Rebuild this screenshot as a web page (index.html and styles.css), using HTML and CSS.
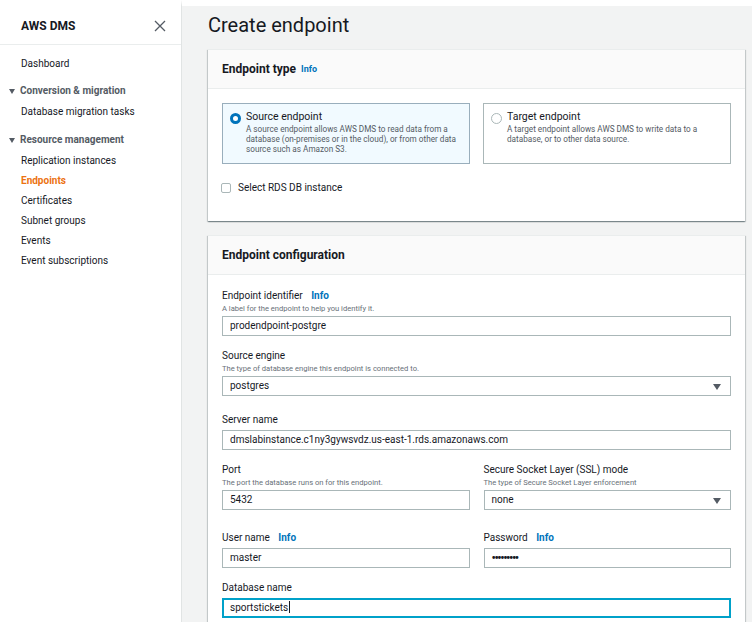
FILE: index.html
```html
<!DOCTYPE html>
<html lang="en">
<head>
<meta charset="utf-8">
<title>Create endpoint</title>
<link rel="stylesheet" href="styles.css">
</head>
<body>
<div class="app">
  <aside class="sidebar">
    <div class="side-head">
      <span class="brand">AWS DMS</span>
      <svg class="close" width="12" height="12" viewBox="0 0 12 12"><path d="M1 1L11 11M11 1L1 11" stroke="#545b64" stroke-width="1.3" fill="none"/></svg>
    </div>
    <nav class="nav">
      <a class="nav-item">Dashboard</a>
      <div class="nav-group"><span class="tri"></span>Conversion &amp; migration</div>
      <a class="nav-item">Database migration tasks</a>
      <div class="nav-group g2"><span class="tri"></span>Resource management</div>
      <a class="nav-item">Replication instances</a>
      <a class="nav-item active">Endpoints</a>
      <a class="nav-item">Certificates</a>
      <a class="nav-item">Subnet groups</a>
      <a class="nav-item">Events</a>
      <a class="nav-item">Event subscriptions</a>
    </nav>
  </aside>
  <main class="main">
    <h1 class="title">Create endpoint</h1>
    <section class="panel">
      <header class="panel-head">Endpoint type <span class="info">Info</span></header>
      <div class="panel-body p1">
        <div class="cards">
          <div class="card selected">
            <span class="radio on"></span>
            <div class="card-text">
              <div class="card-title">Source endpoint</div>
              <div class="card-desc">A source endpoint allows AWS DMS to read data from a database (on-premises or in the cloud), or from other data source such as Amazon S3.</div>
            </div>
          </div>
          <div class="card">
            <span class="radio"></span>
            <div class="card-text">
              <div class="card-title">Target endpoint</div>
              <div class="card-desc">A target endpoint allows AWS DMS to write data to a database, or to other data source.</div>
            </div>
          </div>
        </div>
        <label class="check"><span class="box"></span>Select RDS DB instance</label>
      </div>
    </section>
    <section class="panel panel2">
      <header class="panel-head">Endpoint configuration</header>
      <div class="panel-body p2">
        <div class="field">
          <div class="label">Endpoint identifier <span class="info lg">Info</span></div>
          <div class="desc">A label for the endpoint to help you identify it.</div>
          <div class="input">prodendpoint-postgre</div>
        </div>
        <div class="field">
          <div class="label">Source engine</div>
          <div class="desc">The type of database engine this endpoint is connected to.</div>
          <div class="input select">postgres<span class="caret"></span></div>
        </div>
        <div class="field f-server">
          <div class="label">Server name</div>
          <div class="input nodesc">dmslabinstance.c1ny3gywsvdz.us-east-1.rds.amazonaws.com</div>
        </div>
        <div class="row">
          <div class="field">
            <div class="label">Port</div>
            <div class="desc">The port the database runs on for this endpoint.</div>
            <div class="input">5432</div>
          </div>
          <div class="field">
            <div class="label">Secure Socket Layer (SSL) mode</div>
            <div class="desc">The type of Secure Socket Layer enforcement</div>
            <div class="input select">none<span class="caret"></span></div>
          </div>
        </div>
        <div class="row r-user">
          <div class="field">
            <div class="label">User name <span class="info lg">Info</span></div>
            <div class="input nodesc">master</div>
          </div>
          <div class="field">
            <div class="label">Password <span class="info lg">Info</span></div>
            <div class="input nodesc pw">&#8226;&#8226;&#8226;&#8226;&#8226;&#8226;&#8226;&#8226;&#8226;</div>
          </div>
        </div>
        <div class="field">
          <div class="label">Database name</div>
          <div class="input nodesc focus">sportstickets<span class="cursor"></span></div>
        </div>
      </div>
    </section>
  </main>
</div>
</body>
</html>
```

FILE: styles.css
```css
* { box-sizing: border-box; }
html, body { margin: 0; padding: 0; }
body {
  font-family: Roboto, "Liberation Sans", Arial, sans-serif;
  color: #16191f;
  background: #fff;
  width: 752px;
  height: 622px;
  overflow: hidden;
}
.app { display: flex; height: 622px; }

.sidebar {
  width: 181px;
  flex: none;
  background: #fff;
}
.side-head {
  height: 45px;
  border-bottom: 1px solid #eaeded;
  display: flex;
  align-items: center;
  justify-content: space-between;
  padding: 0 15px 0 21px;
  padding-top: 7px;
}
.brand { font-size: 12px; font-weight: 700; color: #16191f; }
.close { display: block; }
.nav { padding-top: 9px; display: flex; flex-direction: column; }
.nav-item {
  font-size: 10px;
  line-height: 20px;
  padding-left: 21px;
  color: #16191f;
}
.nav-group {
  font-size: 10px;
  font-weight: 700;
  line-height: 20px;
  color: #545b64;
  padding-left: 9px;
  margin-top: 7px;
  display: flex;
  align-items: center;
}
.nav-group.g2 { margin-top: 8px; }
.nav-group + .nav-item { margin-top: 1px; }
.tri {
  width: 0; height: 0;
  border-left: 3.5px solid transparent;
  border-right: 3.5px solid transparent;
  border-top: 5px solid #545b64;
  margin-right: 5px;
}
.nav-item.active { color: #ec7211; font-weight: 700; }

.main {
  flex: 1;
  background: #f2f3f3;
  border-top: 6px solid #fff;
  border-left: 1px solid #e1e4e4;
  padding: 0 7px 0 26px;
}
.title {
  margin: 0;
  font-size: 20px;
  font-weight: 400;
  line-height: 24px;
  padding-top: 7px;
  height: 43px;
  color: #16191f;
}
.panel {
  background: #fff;
  box-shadow: 0 1px 1px 0 rgba(0, 28, 36, 0.3), 1px 1px 1px 0 rgba(0, 28, 36, 0.15), -1px 1px 1px 0 rgba(0, 28, 36, 0.15);
  border-top: 1px solid #eaeded;
}
.panel2 { margin-top: 14px; }
.panel-head {
  height: 39px;
  background: #fafafa;
  border-bottom: 1px solid #eaeded;
  padding: 0 14px;
  display: flex;
  align-items: center;
  font-size: 12px;
  font-weight: 700;
  color: #16191f;
}
.info { color: #0073bb; font-size: 9px; font-weight: 700; margin-left: 5px; }
.info.lg { font-size: 10px; margin-left: 6px; }

.panel-body { padding: 14px 14px; }
.p1 { padding-bottom: 26px; }
.cards { display: grid; grid-template-columns: 1fr 1fr; gap: 13px; }
.card {
  height: 61px;
  border: 1px solid #aab7b8;
  display: flex;
  padding: 6px 7px;
  gap: 5px;
}
.card.selected { background: #f1faff; border-color: #99aebc; }
.radio {
  flex: none;
  width: 11px; height: 11px;
  border-radius: 50%;
  border: 1px solid #aab7b8;
  margin-top: 3px;
  background: #fff;
}
.radio.on { border: 3.5px solid #0073bb; }
.card-title { font-size: 10.5px; line-height: 14px; color: #16191f; }
.card-desc { font-size: 8.2px; line-height: 10px; color: #545b64; }

.check {
  display: flex;
  align-items: center;
  margin-top: 17px;
  font-size: 10px;
  line-height: 14px;
  color: #16191f;
  margin-left: -1px;
}
.box {
  width: 10px; height: 10px;
  border: 1px solid #aab7b8;
  border-radius: 2px;
  margin-right: 7px;
  background: #fff;
}

.p2 { padding-bottom: 6px; }
.field + .field, .field + .row, .row + .field, .row + .row { margin-top: 13px; }
.f-server { margin-top: 17px !important; }
.r-user { margin-top: 21px !important; }
.row { display: grid; grid-template-columns: 1fr 1fr; gap: 14px; }
.row .field + .field { margin-top: 0; }
.label { font-size: 10px; line-height: 14px; color: #16191f; }
.desc { font-size: 7.6px; line-height: 11px; color: #687078; }
.input {
  margin-top: 2px;
  height: 20px;
  border: 1px solid #aab7b8;
  background: #fff;
  font-size: 10px;
  line-height: 18px;
  padding: 0 7px;
  color: #16191f;
  position: relative;
  white-space: nowrap;
}
.input.nodesc { margin-top: 3px; }
.input.pw { font-size: 12px; font-weight: 700; letter-spacing: -1.4px; color: #16191f; }
.select .caret {
  position: absolute;
  right: 9px; top: 7px;
  width: 0; height: 0;
  border-left: 4px solid transparent;
  border-right: 4px solid transparent;
  border-top: 6px solid #545b64;
}
.input.focus { border-color: #00a1c9; box-shadow: 0 0 0 1px #00a1c9 inset; }
.cursor {
  display: inline-block;
  width: 1px; height: 12px;
  background: #16191f;
  vertical-align: -2px;
  margin-left: 1px;
}
```
